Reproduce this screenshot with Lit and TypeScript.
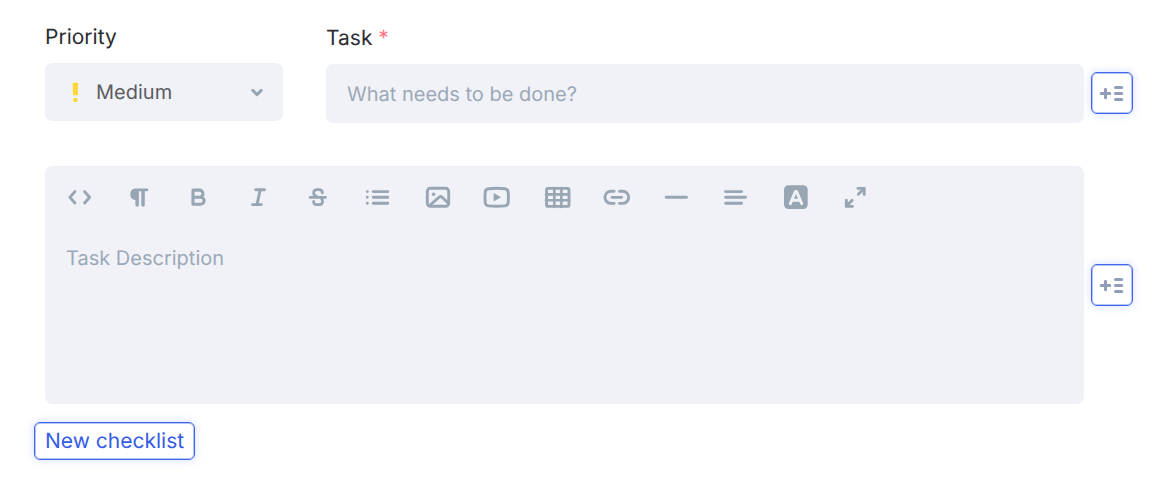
import { LitElement, html, css, svg } from "lit";
import { customElement, state } from "lit/decorators.js";

interface Tool {
  name: string;
  icon: unknown;
}

const tools: Tool[] = [
  { name: "Code view", icon: svg`<path d="M9.9 9.6 4.900 15.3l5 5.700M19.600 9.600l5 5.700-5 5.700"/>` },
  {
    name: "Paragraph format",
    icon: svg`<path class="fill" d="M11.4 6.4H23a1.4 1.4 0 0 1 0 2.9h-2.200v13.600a1.700 1.700 0 0 1-3.500 0V9.300h-2.400v13.600a1.700 1.700 0 0 1-3.500 0v-4.800a5.900 5.900 0 0 1 0-11.700z"/>`,
  },
  {
    name: "Bold",
    icon: svg`<path stroke-width="3.1" d="M9 8.100h6.400a3.500 3.500 0 0 1 0 7.100H9zM9 15.200h7.600a3.500 3.500 0 0 1 0 7.100H9z"/>`,
  },
  { name: "Italic", icon: svg`<path d="M11.7 7.8h8.8M8.5 22.6h8.8M16.2 7.8l-3.2 14.8"/>` },
  {
    name: "Strikethrough",
    icon: svg`<path stroke-width="2.7" d="M7 15.3h15.6M19.4 11c0-2-1.5-3.3-3.5-3.3h-1.8c-2.1 0-3.5 1.2-3.5 3.2 0 1.800 1.100 2.700 2.700 3.200M10.600 19.400c0 2 1.500 3.300 3.500 3.300h2c2 0 3.500-1.300 3.500-3.400 0-1.300-.5-2.400-1.400-3"/>`,
  },
  {
    name: "Unordered list",
    icon: svg`<path d="M10.200 9.600h14.600M10.200 15.300h14.600M10.200 21.200h14.600M4.300 9.600h.01M4.300 15.300h.01M4.300 21.200h.01"/>`,
  },
  {
    name: "Insert image",
    icon: svg`<rect x="4.300" y="6.300" width="21.400" height="18" rx="3"/><path d="m6.500 23.500 9.700-8.300c1-.8 2-.8 2.900 0l6 5.800"/><circle class="fill" cx="10.600" cy="12.300" r="1.800"/>`,
  },
  {
    name: "Insert video",
    icon: svg`<path d="M6.500 6.700q8.200-.8 16.400 0 2.800.3 3.200 3 .6 5.600 0 11.200-.4 2.700-3.200 3-8.200.8-16.400 0-2.800-.3-3.200-3-.6-5.600 0-11.200.4-2.700 3.200-3z"/><path class="fill" d="M11.600 11v8.600l7.500-4.300z"/>`,
  },
  {
    name: "Insert table",
    icon: svg`<rect x="4.600" y="6.400" width="22.400" height="18" rx="1.500"/><path stroke-width="2.600" d="M12.300 6v19M19.400 6v19M4 12.400h23M4 18.300h23"/>`,
  },
  {
    name: "Insert link",
    icon: svg`<path d="M12.100 9.200H9a6.100 6.100 0 0 0 0 12.200h3.100M17.500 9.200h3.100a6.100 6.100 0 0 1 0 12.200h-3.100"/><path stroke-width="2.700" d="M10 15.300h9.600"/>`,
  },
  { name: "Insert horizontal line", icon: svg`<path d="M5.200 15.300h20.200"/>` },
  { name: "Align", icon: svg`<path d="M4.600 9.600h16M4.600 15.300h20M4.600 21.200h16"/>` },
  {
    name: "Text colour",
    icon: svg`<rect class="fill" x="3" y="3.200" width="23.700" height="23.800" rx="4.500"/><path class="letter" d="m9.300 21.600 5-11.700c.3-.7 1.100-.7 1.400 0l5 11.700M11.200 18.200h7.600"/>`,
  },
  {
    name: "Fullscreen",
    icon: svg`<path d="m18.400 12.200 4.700-4.700M12.100 18.400l-4.700 4.700"/><path class="fill" d="M16.500 6.300c0-.8.6-1.400 1.400-1.400h6.500c.8 0 1.300.5 1.300 1.300v6.400c0 .9-.6 1.400-1.400 1.400s-1.500-.6-1.500-1.400V7.800h-4.900c-.8 0-1.400-.7-1.400-1.500zM4.900 18.100c0-.8.6-1.400 1.400-1.400s1.500.6 1.500 1.400v4.800h4.700c.8 0 1.400.6 1.400 1.400s-.6 1.500-1.400 1.500H6.200c-.8 0-1.300-.5-1.300-1.300z"/>`,
  },
];

@customElement("app-root")
export class AppRoot extends LitElement {
  @state() private priority = "Medium";

  static styles = css`
    :host {
      display: block;
      font-family: Inter, "Liberation Sans", sans-serif;
      font-size: 21px;
      line-height: 28px;
      text-rendering: geometricPrecision;
      color: #2c2d32;
      background: #fff;
    }
    * {
      box-sizing: border-box;
    }
    button,
    select,
    input,
    textarea {
      font: inherit;
      text-rendering: inherit;
      margin: 0;
      border: 0;
      outline: 0;
    }
    .form {
      display: grid;
      grid-template-columns: 238px minmax(0, 1fr) 49px;
      padding: 24px 31px 30px 45px;
    }
    .group {
      display: flex;
      flex-direction: column;
      gap: 11px;
    }
    .task {
      padding: 1px 0 0 43px;
    }
    .required {
      color: #ff7285;
    }
    .field {
      width: 100%;
      height: 58px;
      border-radius: 7px;
      background: #f1f2f8;
    }
    .field,
    .text {
      font-size: 20px;
    }
    .picker {
      display: grid;
      align-items: center;
    }
    .picker > * {
      grid-area: 1 / 1;
    }
    .picker svg {
      pointer-events: none;
      z-index: 1;
    }
    .mark {
      margin-left: 26px;
    }
    .arrow {
      justify-self: end;
      margin-right: 19px;
    }
    .select {
      appearance: none;
      padding: 0 48px 0 51px;
      color: #5b5c60;
    }
    .input {
      height: 59px;
      padding: 0 21px;
      color: #35363b;
    }
    .input::placeholder,
    .text::placeholder {
      color: #9ba8b7;
      opacity: 1;
    }
    .side {
      align-self: end;
      padding-bottom: 9px;
      margin-left: 7px;
    }
    .editor {
      grid-column: 1 / 3;
      margin-top: 43px;
      border-radius: 7px;
      background: #f1f2f8;
      overflow: hidden;
    }
    .editor-side {
      display: flex;
      align-items: center;
      margin: 42px 0 0 7px;
    }
    .tools {
      display: grid;
      grid-template-columns: repeat(14, minmax(0, 1fr));
      max-width: 840px;
      height: 62px;
      padding-left: 5px;
      align-items: center;
    }
    .tool {
      display: flex;
      justify-content: center;
      padding: 0;
      background: none;
      cursor: pointer;
    }
    .glyph {
      display: block;
      flex: none;
      width: 30px;
      height: 30px;
      fill: none;
      stroke: #98a5b3;
      stroke-width: 2.9;
      stroke-linecap: round;
      stroke-linejoin: round;
    }
    .glyph .fill {
      fill: #98a5b3;
      stroke: none;
    }
    .glyph .letter {
      stroke: #f1f2f8;
    }
    .text {
      display: block;
      width: 100%;
      height: 176px;
      padding: 16px 21px;
      resize: none;
      background: none;
      color: #35363b;
    }
    .outlined {
      display: flex;
      align-items: center;
      justify-content: center;
      border: 1px solid #3f66e9;
      border-radius: 6px;
      background: #fff;
      color: #345ce6;
      box-shadow:
        inset 0 0 0 1px #b5c4f8,
        0 0 8px #3f66e938;
      cursor: pointer;
    }
    .add {
      width: 42px;
      height: 42px;
      padding: 0;
    }
    .add svg {
      flex: none;
      fill: none;
      stroke: #929dba;
      stroke-width: 3;
      stroke-linecap: round;
    }
    .checklist {
      grid-column: 1 / -1;
      justify-self: start;
      height: 38px;
      margin: 18px 0 0 -11px;
      padding: 2px 10px 0;
    }
  `;

  private addButton(label: string) {
    return html`<button class="outlined add" type="button" aria-label=${label}>
      <svg width="40" height="40" viewBox="1 1 40 40" aria-hidden="true">
        <path d="M10.2 21.5h8.6M14.500 17.200v8.600M24.500 15.500h6.200M24.500 21.500h6.200M24.500 27.500h6.200" />
      </svg>
    </button>`;
  }

  render() {
    return html`
      <form class="form" @submit=${(e: Event) => e.preventDefault()}>
        <div class="group">
          <label for="priority">Priority</label>
          <div class="picker">
            <svg class="mark" width="10" height="22" viewBox="0 0 10 22" fill="#fdd835" aria-hidden="true">
              <path d="M1.700 2.600c0-.6.300-.9.900-.9h3.600c.6 0 .9.300.9.900l-.3 11.700H2z" />
              <circle cx="4.400" cy="19" r="2.300" />
            </svg>
            <select
              id="priority"
              class="field select"
              .value=${this.priority}
              @change=${(e: Event) => (this.priority = (e.target as HTMLSelectElement).value)}
            >
              <option>Medium</option>
            </select>
            <svg class="arrow" width="14" height="12" viewBox="0 0 14 12" fill="none" stroke="#98a5b3" stroke-width="3" stroke-linecap="round" stroke-linejoin="round" aria-hidden="true">
              <path d="m2.800 4.400 4.200 4.200 4.200-4.200" />
            </svg>
          </div>
        </div>
        <div class="group task">
          <label for="task">Task <span class="required">*</span></label>
          <input id="task" class="field input" type="text" placeholder="What needs to be done?" required />
        </div>
        <div class="side">${this.addButton("Add field to task")}</div>

        <div class="editor">
          <div class="tools" role="toolbar" aria-label="Formatting">
            ${tools.map(
              (t) => html`<button class="tool" type="button" aria-label=${t.name}>
                <svg class="glyph" viewBox="0 0 30 30" aria-hidden="true">${t.icon}</svg>
              </button>`,
            )}
          </div>
          <textarea class="text" aria-label="Task Description" placeholder="Task Description"></textarea>
        </div>
        <div class="editor-side">${this.addButton("Add field to description")}</div>

        <button class="outlined checklist" type="button">New checklist</button>
      </form>
    `;
  }
}
